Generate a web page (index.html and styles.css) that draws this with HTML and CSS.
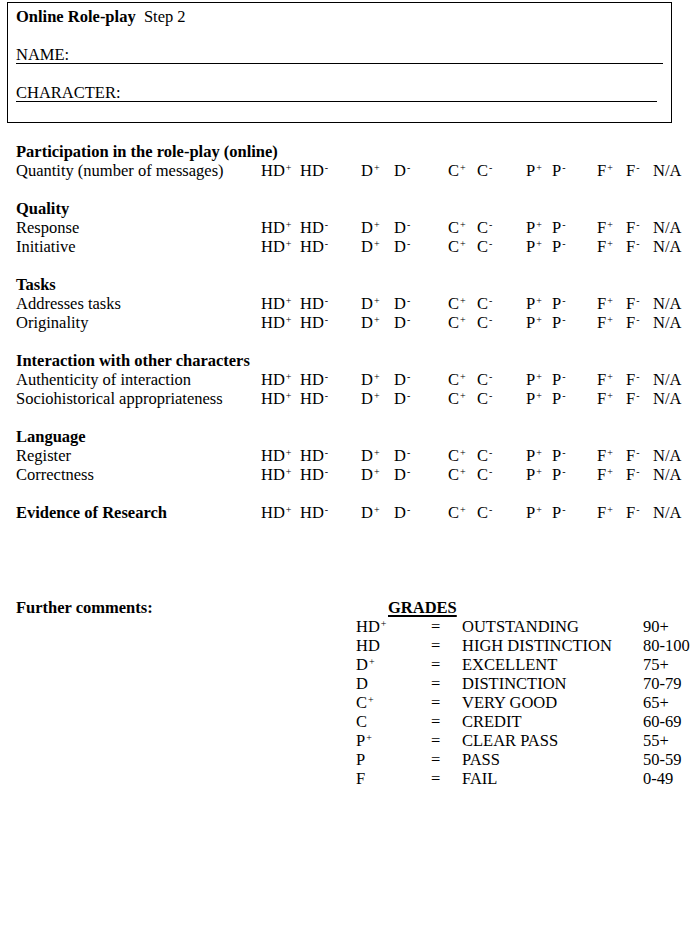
FILE: index.html
```html
<!DOCTYPE html>
<html>
<head>
<meta charset="utf-8">
<link rel="stylesheet" href="styles.css">
</head>
<body>
<div class="page">
  <div class="header-box">
    <div class="line"><b>Online Role-play</b>&nbsp; Step 2</div>
    <div class="line"></div>
    <div class="line field name-field">NAME:</div>
    <div class="line"></div>
    <div class="line field char-field">CHARACTER:</div>
    <div class="line"></div>
  </div>
  <div class="line"></div>

  <div class="row"><span class="label bold">Participation in the role-play (online)</span></div>
  <div class="row"><span class="label">Quantity (number of messages)</span><span>HD<sup>+</sup></span><span>HD<sup>-</sup></span><span>D<sup>+</sup></span><span>D<sup>-</sup></span><span>C<sup>+</sup></span><span>C<sup>-</sup></span><span>P<sup>+</sup></span><span>P<sup>-</sup></span><span>F<sup>+</sup></span><span>F<sup>-</sup></span><span>N/A</span></div>
  <div class="line"></div>

  <div class="row"><span class="label bold">Quality</span></div>
  <div class="row"><span class="label">Response</span><span>HD<sup>+</sup></span><span>HD<sup>-</sup></span><span>D<sup>+</sup></span><span>D<sup>-</sup></span><span>C<sup>+</sup></span><span>C<sup>-</sup></span><span>P<sup>+</sup></span><span>P<sup>-</sup></span><span>F<sup>+</sup></span><span>F<sup>-</sup></span><span>N/A</span></div>
  <div class="row"><span class="label">Initiative</span><span>HD<sup>+</sup></span><span>HD<sup>-</sup></span><span>D<sup>+</sup></span><span>D<sup>-</sup></span><span>C<sup>+</sup></span><span>C<sup>-</sup></span><span>P<sup>+</sup></span><span>P<sup>-</sup></span><span>F<sup>+</sup></span><span>F<sup>-</sup></span><span>N/A</span></div>
  <div class="line"></div>

  <div class="row"><span class="label bold">Tasks</span></div>
  <div class="row"><span class="label">Addresses tasks</span><span>HD<sup>+</sup></span><span>HD<sup>-</sup></span><span>D<sup>+</sup></span><span>D<sup>-</sup></span><span>C<sup>+</sup></span><span>C<sup>-</sup></span><span>P<sup>+</sup></span><span>P<sup>-</sup></span><span>F<sup>+</sup></span><span>F<sup>-</sup></span><span>N/A</span></div>
  <div class="row"><span class="label">Originality</span><span>HD<sup>+</sup></span><span>HD<sup>-</sup></span><span>D<sup>+</sup></span><span>D<sup>-</sup></span><span>C<sup>+</sup></span><span>C<sup>-</sup></span><span>P<sup>+</sup></span><span>P<sup>-</sup></span><span>F<sup>+</sup></span><span>F<sup>-</sup></span><span>N/A</span></div>
  <div class="line"></div>

  <div class="row"><span class="label bold">Interaction with other characters</span></div>
  <div class="row"><span class="label">Authenticity of interaction</span><span>HD<sup>+</sup></span><span>HD<sup>-</sup></span><span>D<sup>+</sup></span><span>D<sup>-</sup></span><span>C<sup>+</sup></span><span>C<sup>-</sup></span><span>P<sup>+</sup></span><span>P<sup>-</sup></span><span>F<sup>+</sup></span><span>F<sup>-</sup></span><span>N/A</span></div>
  <div class="row"><span class="label">Sociohistorical appropriateness</span><span>HD<sup>+</sup></span><span>HD<sup>-</sup></span><span>D<sup>+</sup></span><span>D<sup>-</sup></span><span>C<sup>+</sup></span><span>C<sup>-</sup></span><span>P<sup>+</sup></span><span>P<sup>-</sup></span><span>F<sup>+</sup></span><span>F<sup>-</sup></span><span>N/A</span></div>
  <div class="line"></div>

  <div class="row"><span class="label bold">Language</span></div>
  <div class="row"><span class="label">Register</span><span>HD<sup>+</sup></span><span>HD<sup>-</sup></span><span>D<sup>+</sup></span><span>D<sup>-</sup></span><span>C<sup>+</sup></span><span>C<sup>-</sup></span><span>P<sup>+</sup></span><span>P<sup>-</sup></span><span>F<sup>+</sup></span><span>F<sup>-</sup></span><span>N/A</span></div>
  <div class="row"><span class="label">Correctness</span><span>HD<sup>+</sup></span><span>HD<sup>-</sup></span><span>D<sup>+</sup></span><span>D<sup>-</sup></span><span>C<sup>+</sup></span><span>C<sup>-</sup></span><span>P<sup>+</sup></span><span>P<sup>-</sup></span><span>F<sup>+</sup></span><span>F<sup>-</sup></span><span>N/A</span></div>
  <div class="line"></div>

  <div class="row"><span class="label bold">Evidence of Research</span><span>HD<sup>+</sup></span><span>HD<sup>-</sup></span><span>D<sup>+</sup></span><span>D<sup>-</sup></span><span>C<sup>+</sup></span><span>C<sup>-</sup></span><span>P<sup>+</sup></span><span>P<sup>-</sup></span><span>F<sup>+</sup></span><span>F<sup>-</sup></span><span>N/A</span></div>
  <div class="line"></div>
  <div class="line"></div>
  <div class="line"></div>
  <div class="line"></div>

  <div class="bottom">
    <div class="comments bold">Further comments:</div>
    <div class="grades">
      <div class="grades-title"><span class="bold underline">GRADES</span></div>
      <div class="g-row"><span>HD<sup>+</sup></span><span>=</span><span>OUTSTANDING</span><span>90+</span></div>
      <div class="g-row"><span>HD</span><span>=</span><span>HIGH DISTINCTION</span><span>80-100</span></div>
      <div class="g-row"><span>D<sup>+</sup></span><span>=</span><span>EXCELLENT</span><span>75+</span></div>
      <div class="g-row"><span>D</span><span>=</span><span>DISTINCTION</span><span>70-79</span></div>
      <div class="g-row"><span>C<sup>+</sup></span><span>=</span><span>VERY GOOD</span><span>65+</span></div>
      <div class="g-row"><span>C</span><span>=</span><span>CREDIT</span><span>60-69</span></div>
      <div class="g-row"><span>P<sup>+</sup></span><span>=</span><span>CLEAR PASS</span><span>55+</span></div>
      <div class="g-row"><span>P</span><span>=</span><span>PASS</span><span>50-59</span></div>
      <div class="g-row"><span>F</span><span>=</span><span>FAIL</span><span>0-49</span></div>
    </div>
  </div>
</div>
</body>
</html>
```

FILE: styles.css
```css
html, body {
  margin: 0;
  padding: 0;
  background: #ffffff;
}

body {
  font-family: "Liberation Serif", "Times New Roman", serif;
  font-size: 16.5px;
  line-height: 19px;
  color: #000000;
}

.page {
  padding: 2px 0 0 16px;
}

.header-box {
  margin-left: -9px;
  width: 647px;
  border: 1px solid #000000;
  padding: 4px 8px 1px 8px;
}

.line {
  height: 19px;
}

.field {
  height: 18px;
  border-bottom: 1px solid #000000;
}

.name-field {
  width: 647px;
}

.char-field {
  width: 641px;
}

.bold {
  font-weight: bold;
}

.underline {
  text-decoration: underline;
  text-decoration-thickness: 2px;
  text-underline-offset: 2px;
}

sup {
  font-size: 10px;
  line-height: 0;
  vertical-align: 5px;
  margin-left: 1px;
}

.row {
  display: grid;
  grid-template-columns: 245px 39px 61px 33px 54px 29px 49px 26px 45px 29px 27px auto;
  height: 19px;
  white-space: nowrap;
}

.bottom {
  display: flex;
}

.comments {
  width: 340px;
}

.grades-title {
  padding-left: 32px;
  height: 19px;
}

.g-row {
  display: grid;
  grid-template-columns: 75px 31px 181px auto;
  height: 19px;
  white-space: nowrap;
}
```
